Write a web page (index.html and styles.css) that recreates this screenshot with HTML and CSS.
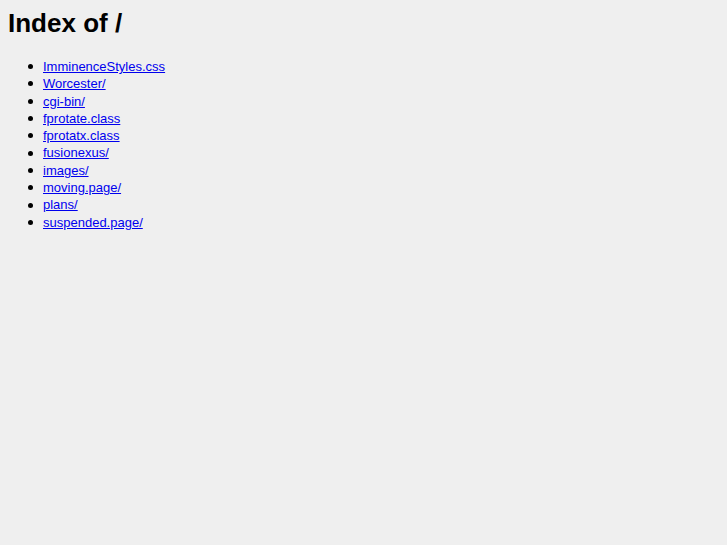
FILE: index.html
```html
<!DOCTYPE html>
<html>
<head>
    <meta charset="UTF-8" />
    <title>Index of /</title>
    <link rel="stylesheet" href="styles.css">
</head>
<body>
    <h1>Index of /</h1>
    <ul class="listing">
        <li><a href="ImminenceStyles.css">ImminenceStyles.css</a></li>
        <li><a href="Worcester/">Worcester/</a></li>
        <li><a href="cgi-bin/">cgi-bin/</a></li>
        <li><a href="fprotate.class">fprotate.class</a></li>
        <li><a href="fprotatx.class">fprotatx.class</a></li>
        <li><a href="fusionexus/">fusionexus/</a></li>
        <li><a href="images/">images/</a></li>
        <li><a href="moving.page/">moving.page/</a></li>
        <li><a href="plans/">plans/</a></li>
        <li><a href="suspended.page/">suspended.page/</a></li>
    </ul>
</body>
</html>
```

FILE: styles.css
```css
body {
    margin: 8px;
    background-color: #efefef;
    color: #000;
    font-family: 'Liberation Sans', Arial, sans-serif;
    font-size: 13px;
}

h1 {
    margin: 0 0 19px;
    font-size: 26px;
    font-weight: bold;
}

.listing {
    margin: 0;
    padding-left: 20px;
    list-style: none;
}

    .listing li {
        display: flex;
        align-items: center;
        gap: 10px;
        line-height: 17.3px;
    }

        .listing li::before {
            content: "";
            width: 5px;
            height: 5px;
            border-radius: 50%;
            background: #000;
            flex-shrink: 0;
        }

    .listing a {
        color: #0000ee;
    }
```
